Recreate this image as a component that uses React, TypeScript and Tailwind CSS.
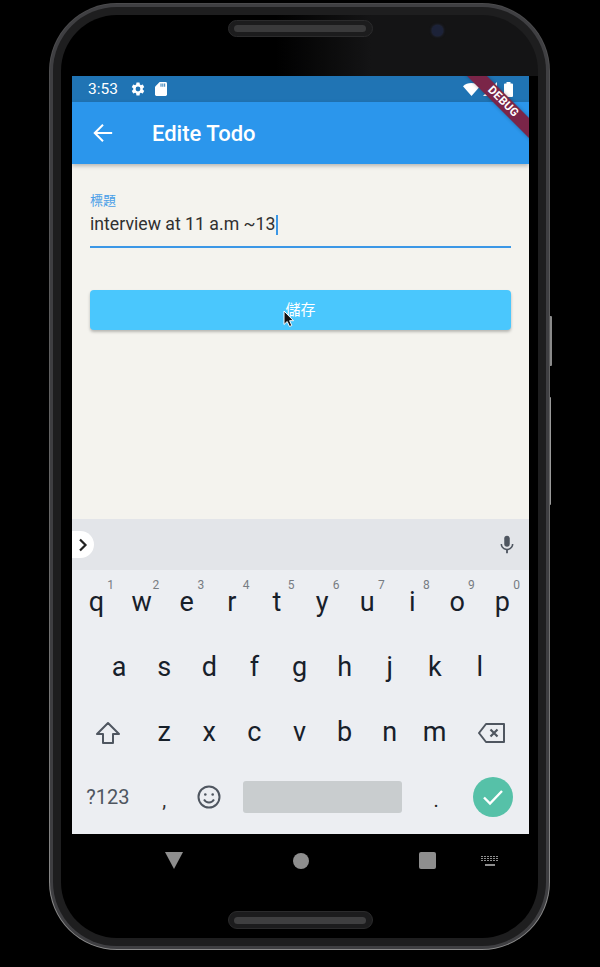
import React from "react";

const sans = "font-['Roboto','Noto_Sans_CJK_TC',sans-serif]";

function Key({ c, n }: { c: string; n?: string }) {
  return (
    <div className="relative flex-none w-[45.1px] h-full flex items-center justify-center text-[27px] leading-none text-[#17202a] pb-[1px]">
      {c}
      {n && <span className="absolute right-[5px] top-[9px] text-[12px] leading-none text-[#777c82]">{n}</span>}
    </div>
  );
}

function Cell({ w, children }: { w: string; children: React.ReactNode }) {
  return <div className={`flex-none h-full flex items-center justify-center ${w}`}>{children}</div>;
}

export default function App() {
  return (
    <div className={`relative w-[600px] h-[967px] bg-black overflow-hidden pt-[3px] pl-[49px] ${sans}`}>
      {/* side buttons */}
      <div className="absolute left-[549px] top-[316px] w-[3px] h-[50px] bg-[#8a8a8a] rounded-r-[1px]" />
      <div className="absolute left-[549px] top-[397px] w-[2px] h-[108px] bg-[#9a9a9a] rounded-r-[1px]" />

      {/* phone body */}
      <div className="relative w-[501px] h-[947px] rounded-[68px] bg-[linear-gradient(180deg,#4a4a4c_0%,#6a6a6a_60%,#8c8c8c_100%)] p-[1px]">
        <div className="w-full h-full rounded-[67px] bg-[#3f3f42] p-[3px]">
          <div className="w-full h-full rounded-[64px] bg-[#1e1e1f] p-[8px]">
            <div className="relative w-full h-full rounded-[56px] bg-[linear-gradient(180deg,transparent_61px,#000_61px),linear-gradient(90deg,#000_45%,#141415_65%)] flex flex-col pl-[11px] pr-[8px]">
              {/* top speaker */}
              <div className="flex-none self-center mr-[2px] mt-[5px] w-[145px] h-[17px] rounded-full bg-[#1c1c1d] border border-[#2b2b2c] flex items-center justify-center">
                <div className="w-[132px] h-[7px] rounded-full bg-[#3a3a3b]" />
              </div>
              <div className="absolute left-[371px] top-[10px] w-[11px] h-[11px] rounded-full bg-[#1c2238] shadow-[0_0_3px_#2f3a5f]" />

              {/* screen */}
              <div className="relative flex-none mt-[39px] w-[457px] h-[758px] overflow-hidden flex flex-col bg-[#f4f3ee]">
                {/* status bar */}
                <div className="flex-none h-[26px] bg-[#2074b4] flex items-center pl-[16px] pr-[16px] text-white">
                  <span className="text-[15.500px] leading-none mt-[1px]">3:53</span>
                  <svg className="ml-[12px]" width="16" height="16" viewBox="0 0 24 24" fill="#fff">
                    <path d="M19.14 12.94c.04-.3.06-.61.06-.94s-.02-.64-.07-.94l2.03-1.58a.49.49 0 0 0 .12-.61l-1.92-3.32a.49.49 0 0 0-.59-.22l-2.39.96a7 7 0 0 0-1.62-.94l-.36-2.54a.48.48 0 0 0-.48-.41h-3.84a.47.47 0 0 0-.47.41l-.36 2.54c-.59.24-1.13.57-1.62.94l-2.39-.96a.48.48 0 0 0-.59.22L2.74 8.87a.48.48 0 0 0 .12.61l2.03 1.58c-.05.3-.09.63-.09.94s.02.64.07.94l-2.03 1.58a.49.49 0 0 0-.12.61l1.92 3.32c.12.22.37.29.59.22l2.39-.96c.5.38 1.03.7 1.62.94l.36 2.54c.05.24.24.41.48.41h3.84c.24 0 .44-.17.47-.41l.36-2.54c.59-.24 1.13-.56 1.62-.94l2.39.96c.22.08.47 0 .59-.22l1.92-3.32a.48.48 0 0 0-.12-.61l-2.01-1.58zM12 15.6A3.6 3.6 0 1 1 12 8.4a3.6 3.6 0 0 1 0 7.2z" />
                  </svg>
                  <svg className="ml-[9px]" width="12" height="14" viewBox="0 0 13 15" fill="#fff">
                    <path d="M5 0h6.500A1.500 1.500 0 0 1 13 1.500v12a1.500 1.500 0 0 1-1.500 1.500h-10A1.500 1.500 0 0 1 0 13.500V5z" />
                    <path d="M6 1.500h1v3.500H6zM8 1.500h1v3.500H8zM10 1.500h1v3.500h-1z" fill="#2074b4" />
                  </svg>
                  <div className="flex-1" />
                  <svg width="17" height="13" viewBox="0 0 17 13" fill="#fff">
                    <path d="M8.500 13 0 3.200C2.200 1.200 5.200 0 8.500 0S14.800 1.200 17 3.200z" />
                  </svg>
                  <svg className="ml-[3px]" width="14" height="14" viewBox="0 0 14 14" fill="#fff">
                    <path d="M0 14 14 0v14z" />
                  </svg>
                  <svg className="ml-[7px]" width="9" height="15" viewBox="0 0 9 15" fill="#fff">
                    <path d="M2.500 0h4v1.500H8a1 1 0 0 1 1 1V14a1 1 0 0 1-1 1H1a1 1 0 0 1-1-1V2.500a1 1 0 0 1 1-1h1.500z" />
                  </svg>
                </div>

                {/* app bar */}
                <div className="flex-none h-[62px] bg-[#2b96ec] flex items-center pl-[20px] shadow-[0_2px_4px_rgba(0,0,0,0.25)] z-10">
                  <svg width="22" height="22" viewBox="0 0 24 24" fill="none" stroke="#fff" strokeWidth="2.200">
                    <path d="M22 12H3.500M12 3l-9 9 9 9" />
                  </svg>
                  <span className="ml-[38px] mt-[1px] text-[22px] leading-none font-medium text-white">Edite Todo</span>
                </div>

                {/* form */}
                <div className="flex-1 px-[18px] pt-[30px] bg-[#f4f3ee]">
                  <div className="text-[13px] leading-[14px] text-[#4a9fe8]">標題</div>
                  <div className="mt-[4px] h-[26px] flex items-center text-[17.700px] leading-none text-[#303030]">
                    interview at 11 a.m ~13
                    <span className="ml-[1px] w-[2px] h-[20px] bg-[#3b97e6]" />
                  </div>
                  <div className="mt-[8px] h-[2px] bg-[#3b97e6]" />
                  <div className="relative mt-[42px] h-[40px] rounded-[4px] bg-[#4ac7fd] shadow-[0_2px_3px_rgba(0,0,0,0.25)] flex items-center justify-center text-[15px] text-white">
                    儲存
                    <svg className="absolute left-[193px] top-[20px]" width="12" height="18" viewBox="0 0 12 18">
                      <path d="M1 1v13.500l3.200-3 2.300 5 2.300-1-2.200-4.800H10.500z" fill="#111" stroke="#fff" strokeWidth="1" />
                    </svg>
                  </div>
                </div>

                {/* suggestion strip */}
                <div className="flex-none h-[51px] bg-[#e3e5e9] flex items-center pr-[11px]">
                  <div className="w-[22px] h-[27px] bg-white rounded-r-full flex items-center justify-center">
                    <svg width="12" height="14" viewBox="0 0 12 14" fill="none" stroke="#222" strokeWidth="2.200">
                      <path d="M3 1.500 8.500 7 3 12.500" />
                    </svg>
                  </div>
                  <div className="flex-1" />
                  <svg width="22" height="22" viewBox="0 0 24 24" fill="#4f5660">
                    <path d="M12 14a3 3 0 0 0 3-3V5a3 3 0 0 0-6 0v6a3 3 0 0 0 3 3z" />
                    <path d="M17.300 11c0 3-2.500 5.100-5.300 5.100S6.700 14 6.700 11H5c0 3.400 2.700 6.200 6 6.700V21h2v-3.300c3.300-.5 6-3.300 6-6.700z" />
                  </svg>
                </div>

                {/* keyboard */}
                <div className="flex-none h-[264px] bg-[#eceef2] px-[2px] flex flex-col">
                  <div className="flex-none h-[66px] flex">
                    {["q", "w", "e", "r", "t", "y", "u", "i", "o", "p"].map((c, i) => (
                      <Key key={c} c={c} n={String((i + 1) % 10)} />
                    ))}
                  </div>
                  <div className="flex-none h-[64px] flex pl-[22.600px]">
                    {["a", "s", "d", "f", "g", "h", "j", "k", "l"].map((c) => (
                      <Key key={c} c={c} />
                    ))}
                  </div>
                  <div className="flex-none h-[65px] flex">
                    <Cell w="w-[67.600px]">
                      <svg width="26" height="24" viewBox="0 0 26 24" fill="none" stroke="#4f5660" strokeWidth="2" strokeLinejoin="round">
                        <path d="M13 2 2 13h6v9h10v-9h6z" />
                      </svg>
                    </Cell>
                    {["z", "x", "c", "v", "b", "n", "m"].map((c) => (
                      <Key key={c} c={c} />
                    ))}
                    <Cell w="w-[69.600px]">
                      <svg width="28" height="22" viewBox="0 0 28 22" fill="none" stroke="#4f5660" strokeWidth="2" strokeLinejoin="round">
                        <path d="M8 2h18v18H8L1 11z" />
                        <path d="M12.500 7.500l7 7M19.500 7.500l-7 7" strokeWidth="2.200" />
                      </svg>
                    </Cell>
                  </div>
                  <div className="flex-none h-[63px] flex items-center">
                    <Cell w="w-[67.600px]">
                      <span className="text-[20px] leading-none text-[#4f5660]">?123</span>
                    </Cell>
                    <Cell w="w-[45.100px]">
                      <span className="text-[20px] leading-none text-[#333] mt-[6px]">,</span>
                    </Cell>
                    <Cell w="w-[45.100px]">
                      <svg width="24" height="24" viewBox="0 0 24 24" fill="none" stroke="#4f5660" strokeWidth="2">
                        <circle cx="12" cy="12" r="10.500" />
                        <circle cx="8.300" cy="9.500" r="1.300" fill="#4f5660" stroke="none" />
                        <circle cx="15.700" cy="9.500" r="1.300" fill="#4f5660" stroke="none" />
                        <path d="M7 14.500c1.200 2 3 3 5 3s3.800-1 5-3" />
                      </svg>
                    </Cell>
                    <div className="flex-none ml-[11px] w-[159px] h-[32px] rounded-[3px] bg-[#c9cdcf]" />
                    <Cell w="w-[68.500px]">
                      <span className="text-[20px] leading-none text-[#222] mt-[6px]">.</span>
                    </Cell>
                    <Cell w="w-[45px]">
                      <div className="flex-none w-[40px] h-[40px] rounded-full bg-[#56c1a8] flex items-center justify-center">
                        <svg width="22" height="18" viewBox="0 0 22 18" fill="none" stroke="#fff" strokeWidth="2.400">
                          <path d="M2 9.500 8 15.500 20 3" />
                        </svg>
                      </div>
                    </Cell>
                  </div>
                </div>

                {/* debug banner */}
                <div className="absolute left-[368px] top-[19px] z-20 w-[126px] h-[14px] rotate-45 bg-[#7a2548] shadow-[0_0_4px_rgba(0,0,0,0.3)] flex items-center justify-center text-[11.500px] leading-none font-bold tracking-[0.3px] text-white">
                  DEBUG
                </div>
              </div>

              {/* nav bar */}
              <div className="flex-none w-[457px] h-[53px] flex items-center pl-[93px]">
                <svg width="18" height="17" viewBox="0 0 18 17" fill="#8e8e8e">
                  <path d="M0 0h18L9 17z" />
                </svg>
                <div className="ml-[110px] w-[16px] h-[16px] rounded-full bg-[#8e8e8e]" />
                <div className="ml-[110px] w-[17px] h-[17px] rounded-[2px] bg-[#8e8e8e]" />
                <svg className="ml-[45px]" width="18" height="10" viewBox="0 0 18 10" fill="#8e8e8e">
                  <path d="M0 0h2v1H0zM3 0h2v1H3zM6 0h2v1H6zM9 0h2v1H9zM12 0h2v1h-2zM15 0h2v1h-2zM0 2h2v1H0zM3 2h2v1H3zM6 2h2v1H6zM9 2h2v1H9zM12 2h2v1h-2zM15 2h2v1h-2zM0 4h2v1H0zM3 4h2v1H3zM6 4h2v1H6zM9 4h2v1H9zM12 4h2v1h-2zM15 4h2v1h-2zM4 8h10v2H4z" />
                </svg>
              </div>

              {/* bottom speaker */}
              <div className="flex-none self-center mr-[2px] mt-[24px] w-[145px] h-[18px] rounded-full bg-[#1c1c1d] border border-[#2b2b2c] flex items-center justify-center">
                <div className="w-[132px] h-[7px] rounded-full bg-[#3f3f40]" />
              </div>
            </div>
          </div>
        </div>
      </div>
    </div>
  );
}
